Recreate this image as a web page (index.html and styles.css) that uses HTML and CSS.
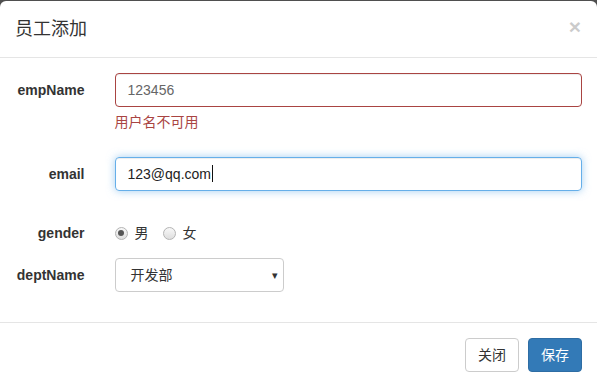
FILE: index.html
```html
<!DOCTYPE html>
<html lang="zh">
<head>
<meta charset="utf-8">
<title>员工添加</title>
<link rel="stylesheet" href="styles.css">
</head>
<body>
<div class="modal-content">
  <div class="modal-header">
    <h4 class="modal-title">员工添加</h4>
    <span class="close">×</span>
  </div>
  <div class="modal-body">
    <div class="form-group has-error">
      <label class="control-label">empName</label>
      <div class="col-10">
        <div class="form-control">123456</div>
        <span class="help-block">用户名不可用</span>
      </div>
    </div>
    <div class="form-group">
      <label class="control-label">email</label>
      <div class="col-10 col-spaced">
        <div class="form-control focused">123@qq.com<span class="text-caret"></span></div>
      </div>
    </div>
    <div class="form-group">
      <label class="control-label">gender</label>
      <div class="col-10 radios">
        <span class="radio-inline"><span class="radio checked"></span>男</span>
        <span class="radio-inline"><span class="radio"></span>女</span>
      </div>
    </div>
    <div class="form-group last">
      <label class="control-label">deptName</label>
      <div class="col-4">
        <div class="form-control select">开发部<span class="arrow">▾</span></div>
      </div>
    </div>
  </div>
  <div class="modal-footer">
    <button class="btn btn-default">关闭</button>
    <button class="btn btn-primary">保存</button>
  </div>
</div>
</body>
</html>
```
FILE: styles.css
```css
* { box-sizing: border-box; }
html, body { margin: 0; padding: 0; }
body {
  background: #4f4f4f;
  font-family: "Liberation Sans", "Noto Sans CJK SC", Arial, sans-serif;
  font-size: 14px;
  line-height: 20px;
  color: #333;
  width: 597px;
  height: 385px;
  overflow: hidden;
}
.modal-content {
  margin-top: 1px;
  background: #fff;
  border-radius: 6px 6px 0 0;
  height: 384px;
}
.modal-header {
  padding: 15px;
  border-bottom: 1px solid #e5e5e5;
  display: flex;
  justify-content: space-between;
  align-items: flex-start;
  height: 57px;
}
.modal-title {
  margin: 0;
  font-size: 18px;
  font-weight: normal;
  line-height: 26px;
  font-family: "Liberation Sans", "Noto Sans CJK SC", sans-serif;
}
.close {
  font-size: 21px;
  font-weight: bold;
  line-height: 1;
  color: #000;
  opacity: .2;
  margin-top: 0;
  margin-right: 1px;
}
.modal-body {
  padding: 15px 0;
}
.form-group {
  display: flex;
  margin-bottom: 15px;
  align-items: flex-start;
}
.form-group.last { margin-bottom: 15px; }
.control-label {
  width: 99.5px;
  flex: none;
  padding: 7px 15px 0 15px;
  text-align: right;
  font-weight: bold;
}
.col-10 {
  width: 497.5px;
  padding: 0 15px;
}
.col-spaced { padding-bottom: 10px; }
.col-4 {
  width: 199px;
  padding: 0 15px;
}
.form-control {
  height: 34px;
  padding: 6px 12px;
  border: 1px solid #ccc;
  border-radius: 4px;
  color: #555;
  box-shadow: inset 0 1px 1px rgba(0,0,0,.075);
  white-space: nowrap;
  position: relative;
}
.has-error .form-control {
  border-color: #a94442;
  color: #666;
}
.has-error .help-block {
  color: #a94442;
}
.help-block {
  display: block;
  margin-top: 5px;
  margin-bottom: 10px;
}
.focused {
  border-color: #66afe9;
  color: #222;
  box-shadow: inset 0 1px 1px rgba(0,0,0,.075), 0 0 8px rgba(102,175,233,.6);
}
.text-caret {
  display: inline-block;
  width: 1px;
  height: 17px;
  background: #111;
  vertical-align: -3px;
  margin-left: 1px;
}
.radios {
  padding-top: 7px;
  display: flex;
  gap: 14px;
}
.radio-inline {
  display: inline-flex;
  align-items: center;
}
.radio {
  width: 13px;
  height: 13px;
  border-radius: 50%;
  border: 1px solid #b4b4b4;
  background: linear-gradient(#f8f8f8, #dedede);
  margin-right: 7px;
  position: relative;
}
.radio.checked::after {
  content: "";
  position: absolute;
  left: 2.5px;
  top: 2.5px;
  width: 6px;
  height: 6px;
  border-radius: 50%;
  background: #555;
}
.select {
  padding-left: 15px;
  color: #333;
  box-shadow: none;
}
.arrow {
  position: absolute;
  right: 5px;
  top: 6px;
  font-size: 11px;
  color: #333;
}
.modal-footer {
  border-top: 1px solid #e5e5e5;
  padding: 15px;
  display: flex;
  justify-content: flex-end;
  gap: 9px;
}
.btn {
  font-family: "Liberation Sans", "Noto Sans CJK SC", sans-serif;
  font-size: 14px;
  line-height: 20px;
  height: 34px;
  padding: 6px 12px;
  border: 1px solid transparent;
  border-radius: 4px;
}
.btn-default {
  background: #fff;
  border-color: #ccc;
  color: #333;
}
.btn-primary {
  background: #337ab7;
  border-color: #2e6da4;
  color: #fff;
}
```
